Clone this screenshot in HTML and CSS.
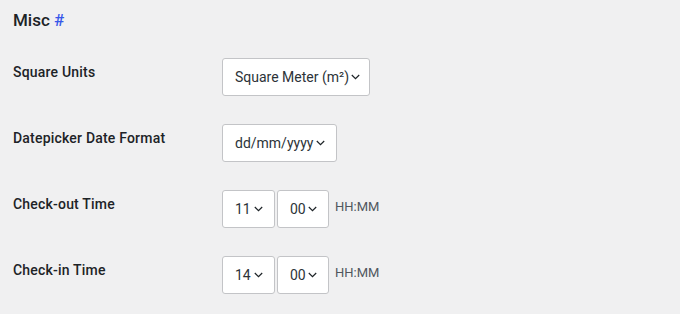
FILE: index.html
```html
<!DOCTYPE html>
<html lang="en">
<head>
    <meta charset="UTF-8">
    <meta name="viewport" content="width=device-width, initial-scale=1.0">
    <title>Misc Settings</title>
    <link rel="stylesheet" href="styles.css">
</head>
<body>

<div class="wrap">
    <h2 class="section-title">Misc <a href="#misc" class="anchor">#</a></h2>

    <div class="form-table">
        <div class="row">
            <div class="label">Square Units</div>
            <div class="field">
                <div class="select select-units">
                    <span>Square Meter (m²)</span>
                    <svg class="chev" width="9" height="6" viewBox="0 0 9 6"><path d="M0.8 1l3.7 3.7 3.7-3.7" fill="none" stroke="#1d2327" stroke-width="1.2"/></svg>
                </div>
            </div>
        </div>

        <div class="row">
            <div class="label">Datepicker Date Format</div>
            <div class="field">
                <div class="select select-date">
                    <span>dd/mm/yyyy</span>
                    <svg class="chev" width="9" height="6" viewBox="0 0 9 6"><path d="M0.8 1l3.7 3.7 3.7-3.7" fill="none" stroke="#1d2327" stroke-width="1.2"/></svg>
                </div>
            </div>
        </div>

        <div class="row">
            <div class="label">Check-out Time</div>
            <div class="field">
                <div class="select select-hour">
                    <span>11</span>
                    <svg class="chev" width="9" height="6" viewBox="0 0 9 6"><path d="M0.8 1l3.7 3.7 3.7-3.7" fill="none" stroke="#1d2327" stroke-width="1.2"/></svg>
                </div>
                <div class="select select-min">
                    <span>00</span>
                    <svg class="chev" width="9" height="6" viewBox="0 0 9 6"><path d="M0.8 1l3.7 3.7 3.7-3.7" fill="none" stroke="#1d2327" stroke-width="1.2"/></svg>
                </div>
                <span class="hint">HH:MM</span>
            </div>
        </div>

        <div class="row">
            <div class="label">Check-in Time</div>
            <div class="field">
                <div class="select select-hour">
                    <span>14</span>
                    <svg class="chev" width="9" height="6" viewBox="0 0 9 6"><path d="M0.8 1l3.7 3.7 3.7-3.7" fill="none" stroke="#1d2327" stroke-width="1.2"/></svg>
                </div>
                <div class="select select-min">
                    <span>00</span>
                    <svg class="chev" width="9" height="6" viewBox="0 0 9 6"><path d="M0.8 1l3.7 3.7 3.7-3.7" fill="none" stroke="#1d2327" stroke-width="1.2"/></svg>
                </div>
                <span class="hint">HH:MM</span>
            </div>
        </div>
    </div>
</div>

</body>
</html>
```

FILE: styles.css
```css
body {
    font-family: Roboto, "Noto Sans", sans-serif;
    background-color: #f0f0f1;
    color: #1d2327;
    margin: 0;
    padding: 0;
}

.wrap {
    padding: 9px 13px 0;
}

.section-title {
    font-size: 17px;
    font-weight: 500;
    line-height: 22px;
    margin: 0 0 13px;
}

.anchor {
    color: #3858e9;
    text-decoration: none;
}

.row {
    display: flex;
    padding: 14px 0;
}

.label {
    width: 209px;
    font-size: 14px;
    font-weight: 500;
    line-height: 18px;
    letter-spacing: 0.2px;
    padding-top: 5px;
}

.field {
    display: flex;
    align-items: center;
    gap: 2px;
    font-size: 14px;
}

.select {
    display: flex;
    align-items: center;
    box-sizing: border-box;
    height: 38px;
    padding: 0 11px 0 12px;
    background-color: #fff;
    border: 1px solid #c3c4c7;
    border-radius: 3px;
    color: #2c3338;
    white-space: nowrap;
}

.select .chev {
    margin-left: auto;
    padding-left: 2px;
    flex-shrink: 0;
}

.select-units { width: 148px; }
.select-date { width: 115px; }
.select-hour { width: 53px; }
.select-min { width: 52px; }

.hint {
    margin-left: 4px;
    margin-top: -6px;
    color: #50575e;
    font-size: 13px;
}
```
